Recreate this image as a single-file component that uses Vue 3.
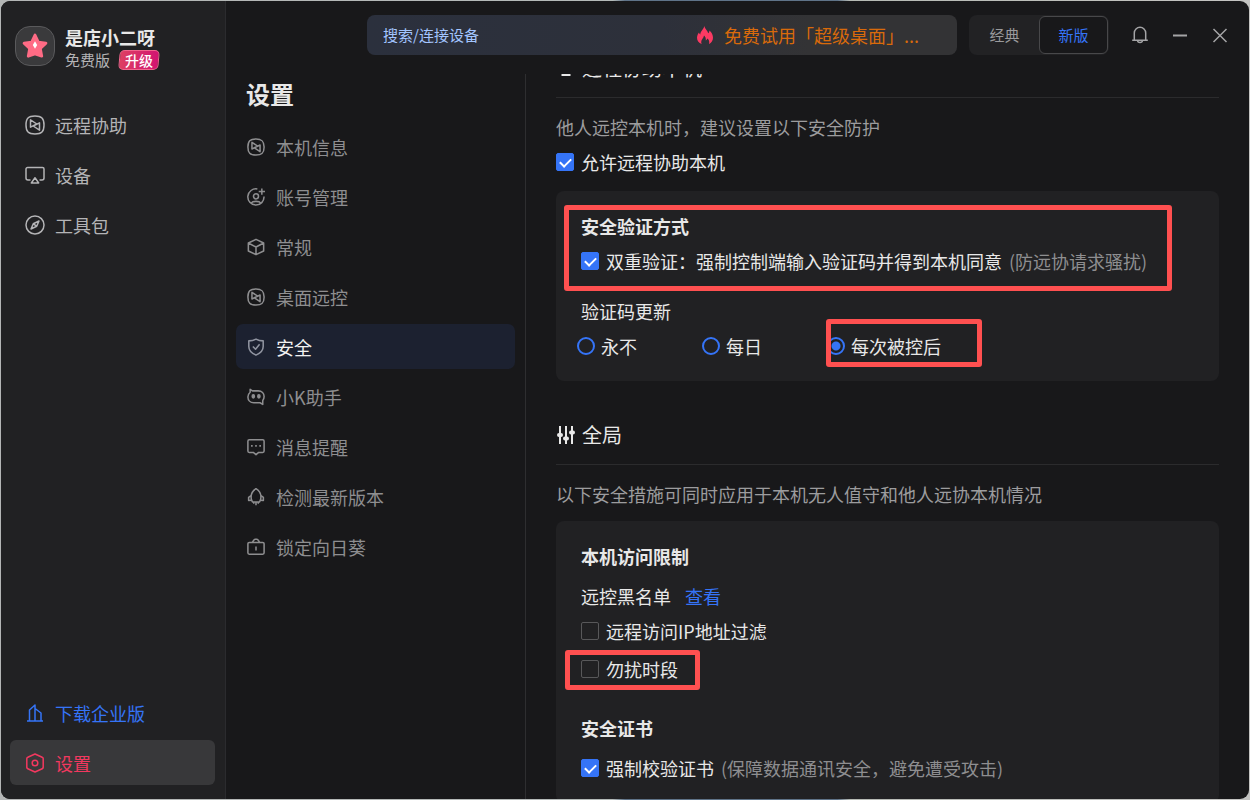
<script setup>
import { ref } from 'vue'

const mainNav = [
  { icon: 'remote', label: '远程协助' },
  { icon: 'device', label: '设备' },
  { icon: 'compass', label: '工具包' }
]

const settingsNav = [
  { icon: 'remote', label: '本机信息' },
  { icon: 'account', label: '账号管理' },
  { icon: 'cube', label: '常规' },
  { icon: 'remote', label: '桌面远控' },
  { icon: 'shield', label: '安全' },
  { icon: 'bot', label: '小K助手' },
  { icon: 'message', label: '消息提醒' },
  { icon: 'rocket', label: '检测最新版本' },
  { icon: 'lock', label: '锁定向日葵' }
]

const icons = {
  remote:
    '<path d="M10 1c6.600 0 9 2.400 9 9s-2.400 9-9 9-9-2.400-9-9 2.400-9 9-9z"/><path d="M5.500 4.800v7.400l6.300-3.200zM14.500 15.200V7.800L8.200 11z"/>',
  device:
    '<path d="M5.500 15H3a2 2 0 0 1-2-2V4a1.500 1.500 0 0 1 1.500-1.500h15A1.500 1.500 0 0 1 19 4v9a2 2 0 0 1-2 2h-2.500"/><path d="M10 12.800l3.700 5.200H6.300z"/>',
  compass:
    '<circle cx="10" cy="10" r="9"/><path d="M14 6l-2.300 5.300L6 14l2.300-5.300zM8.300 8.700l3.400 2.600"/>',
  account:
    '<path d="M11.500 1.100A9 9 0 1 0 18.900 9.500"/><path d="M16.500.5v7M13 4h7"/><circle cx="10" cy="9.300" r="2.800"/><path d="M4.500 16.800c2-2.600 9-2.600 11 0"/>',
  cube: '<path d="M10 1.500l8.500 4v9L10 18.500l-8.500-4v-9zM1.500 5.500L10 10l8.500-4.500M10 10v8.500"/>',
  shield:
    '<path d="M10 1.200c2.600 1.500 5 2 8 2v6.300c0 4.500-3.200 7.500-8 9.500-4.800-2-8-5-8-9.500V3.200c3 0 5.400-.5 8-2z"/><path d="M6.500 9.500l3 3 4.500-5.500"/>',
  bot:
    '<path d="M3.500 1.500l2.500 1.700h6.500c4 0 6.500 2.800 6.500 6.300 0 2-.8 3.500-1.500 4.300v4.400l-3-1.800H7.500C3.500 16.400 1 13.500 1 10c0-2.200 1-4 2.500-5.300z"/><ellipse cx="7" cy="9.300" rx="1.200" ry="1.700" fill="currentColor"/><ellipse cx="13.200" cy="9.300" rx="1.200" ry="1.700" fill="currentColor"/>',
  message:
    '<path d="M2.500 2h15A1.500 1.500 0 0 1 19 3.500v11a1.500 1.500 0 0 1-1.500 1.500H13l-3 2.500L7 16H2.500A1.500 1.500 0 0 1 1 14.500v-11A1.500 1.500 0 0 1 2.500 2z"/><path d="M4.500 8.800h1.800M9.100 8.800h1.800M13.700 8.800h1.800" stroke-width="2"/>',
  rocket:
    '<path d="M10 .8c3.500 2.200 5.500 5.400 5.500 9.200 0 2-.6 4-1.500 5.500H6C5.100 14 4.500 12 4.500 10 4.500 6.200 6.500 3 10 .8z"/><path d="M4.500 8.500L1.800 10.500V14l3.400-.5M15.500 8.500l2.700 2V14l-3.400-.5M7.500 15.500v2M10 15.500v3.700M12.500 15.500v2"/>',
  lock:
    '<rect x="1" y="5" width="18" height="13" rx="1.500"/><path d="M6 5l1.500-2.500A2 2 0 0 1 9 1.500h2a2 2 0 0 1 1.500 1L14 5M10 9.500v4.500"/>',
  building: '<path d="M2 18h16M4.500 18V7L10 2v16M10 5.500l6 4.500v8"/>',
  hexagon:
    '<path d="M10 1l7.200 3.300a1.500 1.500 0 0 1 1 1.300v8.800a1.500 1.500 0 0 1-1 1.300L10 19l-7.200-3.300a1.500 1.500 0 0 1-1-1.300V5.600a1.500 1.500 0 0 1 1-1.300z"/><circle cx="10" cy="10" r="2.800"/>'
}

const edition = ref('新版')
const activeSetting = ref('安全')
const keyword = ref('')
const allowRemote = ref(true)
const doubleCheck = ref(true)
const refresh = ref('每次被控后')
const refreshOptions = ['永不', '每日', '每次被控后']
const ipFilter = ref(false)
const quietHours = ref(false)
const forceCert = ref(true)
</script>

<template>
  <div class="desktop">
    <div class="window">
      <aside class="sidebar">
        <div class="profile">
          <div class="avatar">
            <svg viewBox="0 0 40 40" aria-hidden="true">
              <path d="M20 8.500l3.500 7.400 8 1.100-5.900 5.600 1.500 8.100-7.100-2.300-7.100 2.300 1.500-8.100L8.500 17l8-1.100z" fill="#ff6b85" stroke="#ff6b85" stroke-width="3" stroke-linejoin="round" />
              <path d="M20 15l2.300 4-2.300 4-2.300-4z" fill="#fff" />
            </svg>
          </div>
          <div class="who">
            <div class="name">是店小二呀</div>
            <div class="plan">
              <span>免费版</span>
              <button type="button" class="upgrade"><span>升级</span></button>
            </div>
          </div>
        </div>

        <nav class="main-nav">
          <button v-for="item in mainNav" :key="item.label" type="button" class="main-item">
            <svg class="icon" viewBox="0 0 20 20" aria-hidden="true" v-html="icons[item.icon]"></svg>
            {{ item.label }}
          </button>
        </nav>

        <div class="bottom-nav">
          <a class="main-item enterprise" href="#enterprise">
            <svg class="icon" viewBox="0 0 20 20" aria-hidden="true" v-html="icons.building"></svg>
            下载企业版
          </a>
          <button type="button" class="main-item current">
            <svg class="icon" viewBox="0 0 20 20" aria-hidden="true" v-html="icons.hexagon"></svg>
            设置
          </button>
        </div>
      </aside>

      <div class="right">
        <header class="topbar">
          <div class="search">
            <input v-model="keyword" type="text" aria-label="搜索/连接设备" placeholder="搜索/连接设备" />
            <a class="promo" href="#trial">
              <svg viewBox="0 0 18 20" aria-hidden="true">
                <path d="M8.300 1c.5 3 3.500 4.500 3.900 7.300.9-.6 1.200-1.600 1.200-2.800 2.300 2 3.600 4.500 3.600 7.200 0 3-1.600 5-4 6.300.6-2.300.1-4.200-1.700-5.400-.3 1-.8 1.600-1.500 1.900.2-2.200-.4-3.700-1.800-4.900-.2 2.600-2.800 3.900-2.800 6.400 0 .8.200 1.500.5 2C2.600 17.800 1 15.700 1 12.800c0-2.300 1-4.100 2-5.300.2 1 .6 1.600 1.300 2C4.300 5.800 7.800 4.700 8.300 1z" fill="#fb3a63" />
              </svg>
              免费试用「超级桌面」...
            </a>
          </div>
          <div class="editions">
            <button
              v-for="name in ['经典', '新版']"
              :key="name"
              type="button"
              :class="{ on: edition === name }"
              @click="edition = name"
            >{{ name }}</button>
          </div>
          <div class="controls">
            <button type="button" aria-label="通知">
              <svg class="icon" viewBox="0 0 20 20" aria-hidden="true"><path d="M4.300 15V8a5.700 5.700 0 0 1 11.400 0v7M2.200 15.200h15.600M7.500 15.500c.3 2.800 4.700 2.800 5 0" /></svg>
            </button>
            <button type="button" aria-label="最小化">
              <svg class="icon thick" viewBox="0 0 20 20" aria-hidden="true"><path d="M3 10.500h14" /></svg>
            </button>
            <button type="button" aria-label="关闭">
              <svg class="icon" viewBox="0 0 20 20" aria-hidden="true"><path d="M3.500 4l13 13M16.500 4l-13 13" /></svg>
            </button>
          </div>
        </header>

        <div class="body">
          <nav class="settings-nav">
            <h1>设置</h1>
            <button
              v-for="item in settingsNav"
              :key="item.label"
              type="button"
              class="settings-item"
              :class="{ active: activeSetting === item.label }"
              @click="activeSetting = item.label"
            >
              <svg class="icon" viewBox="0 0 20 20" aria-hidden="true" v-html="icons[item.icon]"></svg>
              {{ item.label }}
            </button>
          </nav>

          <main class="content">
            <div class="scrolled">
              <section>
                <h2>
                  <svg viewBox="0 0 20 20" aria-hidden="true"><path d="M2 2h16v10H2zM10 12v4M5.500 17h9" fill="none" stroke="currentColor" stroke-width="2" /></svg>
                  远程协助本机
                </h2>
                <p class="desc">他人远控本机时，建议设置以下安全防护</p>
                <label class="check allow"><input v-model="allowRemote" type="checkbox" />允许远程协助本机</label>

                <div class="card">
                  <div class="group">
                    <h3>安全验证方式</h3>
                    <label class="check near">
                      <input v-model="doubleCheck" type="checkbox" />
                      <span>双重验证：强制控制端输入验证码并得到本机同意</span>
                      <span class="hint">(防远协请求骚扰)</span>
                    </label>
                    <span class="mark mark-verify"></span>
                  </div>
                  <fieldset>
                    <legend>验证码更新</legend>
                    <div class="radios">
                      <label v-for="option in refreshOptions" :key="option" class="radio">
                        <input v-model="refresh" type="radio" name="refresh" :value="option" />
                        {{ option }}
                        <span v-if="option === '每次被控后'" class="mark mark-refresh"></span>
                      </label>
                    </div>
                  </fieldset>
                </div>
              </section>

              <section class="global">
                <h2>
                  <svg viewBox="0 0 20 20" aria-hidden="true">
                    <path d="M4 1v18M10 1v18M16 1v18" stroke="currentColor" stroke-width="2" />
                    <path d="M3 10h2M9 13.500h2M15 7.500h2" stroke="currentColor" stroke-width="4" stroke-linecap="round" />
                  </svg>
                  全局
                </h2>
                <p class="desc">以下安全措施可同时应用于本机无人值守和他人远协本机情况</p>

                <div class="card">
                  <h3>本机访问限制</h3>
                  <div class="blacklist">远控黑名单<a href="#blacklist">查看</a></div>
                  <label class="check near"><input v-model="ipFilter" type="checkbox" />远程访问IP地址过滤</label>
                  <label class="check quiet">
                    <input v-model="quietHours" type="checkbox" />勿扰时段
                    <span class="mark mark-quiet"></span>
                  </label>
                  <h3 class="cert">安全证书</h3>
                  <label class="check far">
                    <input v-model="forceCert" type="checkbox" />
                    <span>强制校验证书</span>
                    <span class="hint">(保障数据通讯安全，避免遭受攻击)</span>
                  </label>
                </div>
              </section>
            </div>
          </main>
        </div>
      </div>
    </div>
  </div>
</template>

<style>
body {
  margin: 0;
}
</style>

<style scoped>
.desktop {
  box-sizing: border-box;
  height: 100vh;
  padding: 1px;
  overflow: hidden;
  background: linear-gradient(90deg, #b4b6b6 0%, #b4bab8 49%, #5f7388 50%, #5f7388 67%, #b6bab4 68%, #c4c4c2 100%);
  font-family: "Noto Sans CJK SC", "Liberation Sans", sans-serif;
  font-size: 18px;
  line-height: 30px;
  color: #e8e8e8;
}

.desktop * {
  box-sizing: border-box;
}

button,
input {
  font: inherit;
  color: inherit;
}

button {
  padding: 0;
  border: 0;
  background: none;
  text-align: left;
  cursor: pointer;
}

a {
  color: #3574f7;
  text-decoration: none;
}

h1,
h2,
h3,
p {
  margin: 0;
}

.window {
  display: flex;
  height: 100%;
  overflow: hidden;
  border-radius: 9px;
  background: #18181a;
}

.icon {
  flex: none;
  width: 20px;
  height: 20px;
  fill: none;
  stroke: currentColor;
  stroke-width: 1.5;
  stroke-linejoin: round;
}

/* Sidebar */
.sidebar {
  display: flex;
  flex: none;
  flex-direction: column;
  width: 225px;
  padding: 0 10px 14px 9px;
  border-right: 1px solid #2b2b2e;
  background: #212123;
}

.profile {
  display: flex;
  gap: 10px;
  padding: 25px 0 0 5px;
}

.avatar {
  width: 40px;
  height: 40px;
  border: 1px solid #5a5a5c;
  border-radius: 15px;
  background: #3a3a3c;
}

.avatar svg {
  display: block;
}

.name {
  font-weight: 700;
  line-height: 22px;
}

.plan {
  display: flex;
  align-items: center;
  gap: 9px;
  height: 24px;
  font-size: 15px;
  color: #b4b4b6;
}

.upgrade {
  width: 40px;
  height: 20px;
  border: 1px solid #f0648c;
  border-radius: 5px;
  background: linear-gradient(90deg, #dd3f62, #d21471);
  color: #fff;
  font-size: 14px;
  font-weight: 500;
  line-height: 18px;
  text-align: center;
  transform: skewX(-5deg);
}

.upgrade span {
  display: block;
  transform: skewX(5deg);
}

.main-nav {
  display: flex;
  flex: 1;
  flex-direction: column;
  gap: 5px;
  padding-top: 30px;
}

.bottom-nav {
  display: flex;
  flex-direction: column;
  gap: 5px;
}

.main-item {
  display: flex;
  align-items: center;
  gap: 10px;
  height: 45px;
  padding-left: 15px;
  border-radius: 6px;
  color: #b4b4b6;
}

.main-item.enterprise {
  color: #3574f7;
}

.main-item.current {
  background: #38383a;
  color: #f2385f;
}

/* Top bar */
.right {
  display: flex;
  flex: 1;
  flex-direction: column;
  min-width: 0;
}

.topbar {
  display: flex;
  flex: none;
  align-items: flex-start;
  height: 73px;
  padding: 14px 19px 0 141px;
}

.search {
  display: flex;
  flex: 1;
  align-items: center;
  min-width: 0;
  height: 40px;
  padding: 0 38px 0 16px;
  border-radius: 8px;
  background: linear-gradient(90deg, #2b303d, #2d303a 50%, #333335 75%);
}

.search input {
  flex: 1;
  min-width: 0;
  padding: 0;
  border: 0;
  outline: 0;
  background: none;
  font-size: 15px;
}

.search input::placeholder {
  color: #a3c5ff;
  opacity: 1;
}

.promo {
  display: flex;
  align-items: center;
  gap: 10px;
  color: #d96a0b;
  white-space: nowrap;
}

.promo svg {
  width: 18px;
  height: 20px;
}

.editions {
  display: flex;
  flex: none;
  width: 140px;
  height: 40px;
  margin-left: 12px;
  padding: 1px;
  border-radius: 8px;
  background: #222224;
}

.editions button {
  flex: 1;
  border: 1px solid transparent;
  border-radius: 6px;
  color: #9a9a9c;
  font-size: 15px;
  text-align: center;
}

.editions button.on {
  border-color: #48484a;
  background: #18181a;
  color: #3574f7;
}

.controls {
  display: flex;
  gap: 20px;
  margin-left: 21px;
  padding-top: 10px;
  color: #a4a4a6;
}

.controls button {
  width: 20px;
  height: 20px;
}

.controls svg {
  display: block;
}

.thick {
  stroke-width: 2;
}

/* Settings navigation */
.body {
  display: flex;
  flex: 1;
  min-height: 0;
}

.settings-nav {
  display: flex;
  flex: none;
  flex-direction: column;
  gap: 5px;
  width: 300px;
  padding: 5px 10px 0;
  border-right: 1px solid #2e2e30;
}

.settings-nav h1 {
  height: 40px;
  padding-left: 10px;
  font-size: 24px;
  line-height: 30px;
}

.settings-item {
  display: flex;
  align-items: center;
  gap: 11px;
  height: 45px;
  padding-left: 11px;
  border-radius: 7px;
  color: #8e8e90;
}

.settings-item .icon {
  width: 18px;
  height: 18px;
  stroke-width: 1.7;
}

.settings-item.active {
  background: #1c2130;
  color: #f2f2f2;
}

.settings-item.active .icon {
  color: #9094a0;
}

/* Settings content */
.content {
  flex: 1;
  min-width: 0;
  overflow: hidden;
}

.scrolled {
  margin-top: -21px;
  padding: 0 30px;
}

.global {
  margin-top: 39px;
}

h2 {
  display: flex;
  gap: 6px;
  align-items: center;
  padding-bottom: 14px;
  border-bottom: 1px solid #2b2b2d;
  font-size: 20px;
  font-weight: 400;
}

h2 svg {
  width: 20px;
  height: 20px;
}

h3 {
  font-size: 18px;
  font-weight: 700;
}

.desc {
  margin-top: 14px;
  color: #9c9c9e;
}

.card {
  margin-top: 12px;
  padding: 20px 25px;
  border-radius: 8px;
  background: #212123;
}

.check {
  position: relative;
  display: flex;
  align-items: center;
  gap: 7px;
  width: fit-content;
  white-space: nowrap;
}

.allow {
  margin-top: 5px;
  margin-bottom: 14px;
}

.near {
  margin-top: 5px;
}

.quiet {
  margin-top: 8px;
}

.far {
  margin-top: 10px;
}

.hint {
  color: #8e8e90;
}

input[type="checkbox"],
input[type="radio"] {
  flex: none;
  width: 18px;
  height: 18px;
  margin: 0;
  appearance: none;
}

input[type="checkbox"] {
  border: 1px solid #58585a;
  border-radius: 2px;
}

input[type="checkbox"]:checked {
  display: grid;
  place-items: center;
  border-color: #3574f7;
  background: #3574f7;
}

input[type="checkbox"]:checked::before {
  content: "";
  width: 9px;
  height: 5px;
  margin-bottom: 2px;
  border: solid #fff;
  border-width: 0 0 2px 2px;
  transform: rotate(-45deg);
}

input[type="radio"] {
  border: 2px solid #3574f7;
  border-radius: 50%;
}

input[type="radio"]:checked {
  background: radial-gradient(circle, #3574f7 4px, transparent 5px);
}

.group {
  position: relative;
}

fieldset {
  min-width: 0;
  margin: 20px 0 0;
  padding: 0;
  border: 0;
}

legend {
  padding: 0;
}

.radios {
  display: grid;
  grid-template-columns: 125px 125px 155px;
  margin: 5px 0 0 -4px;
}

.radio {
  position: relative;
  display: flex;
  align-items: center;
  gap: 6px;
}

.blacklist {
  display: flex;
  gap: 14px;
  margin-top: 10px;
}

.cert {
  margin-top: 29px;
}

/* Highlight frames laid over the settings */
.mark {
  position: absolute;
  border: 5px solid #ff5050;
  border-radius: 3px;
  pointer-events: none;
}

.mark-verify {
  inset: -6px 22px -15px -17px;
}

.mark-refresh {
  inset: -12px 0 -6px -1px;
}

.mark-quiet {
  inset: -4px -22px -6px -16px;
}
</style>
